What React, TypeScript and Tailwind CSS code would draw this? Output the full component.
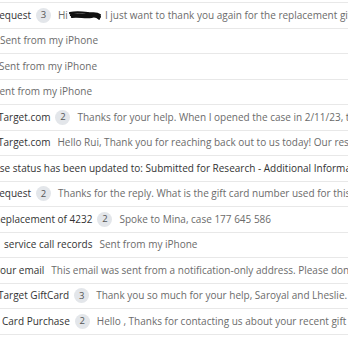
import React from "react";

type Row = {
  shift: number;
  subject?: string;
  badge?: string;
  preview?: React.ReactNode;
};

const Badge = ({ n }: { n: string }) => (
  <span className="inline-flex items-center justify-center w-[15px] h-[15px] rounded-full bg-[#e3e6ea] text-[9.5px] text-[#555] ml-[5px] mr-[7px] shrink-0">
    {n}
  </span>
);

const Scribble = () => (
  <svg width="32" height="12" viewBox="0 0 34 12" className="inline-block ml-[1px] mr-[4px] shrink-0">
    <path d="M1 4 C8 2 14 3 20 4 C25 5 29 3 33 6 M2 6 C9 5 16 7 22 6 C27 5 31 7 33 8 M3 8 C10 7 17 9 24 8 C28 7 31 9 32 10 M4 5 L30 7" stroke="#111" strokeWidth="2.2" fill="none" strokeLinecap="round" />
  </svg>
);

const rows: Row[] = [
  {
    shift: -7,
    subject: "Request",
    badge: "3",
    preview: (
      <>
        Hi<Scribble />I just want to thank you again for the replacement gift card
      </>
    ),
  },
  { shift: 0, preview: "Sent from my iPhone" },
  { shift: -1, preview: "Sent from my iPhone" },
  { shift: -6, preview: "Sent from my iPhone" },
  {
    shift: -2,
    subject: "Target.com",
    badge: "2",
    preview: "Thanks for your help. When I opened the case in 2/11/23, the",
  },
  {
    shift: -2,
    subject: "Target.com",
    preview: "Hello Rui, Thank you for reaching back out to us today! Our research",
  },
  {
    shift: -12,
    subject: "Case status has been updated to: Submitted for Research - Additional Information",
  },
  {
    shift: -7,
    subject: "Request",
    badge: "2",
    preview: "Thanks for the reply. What is the gift card number used for this purchase",
  },
  {
    shift: -6,
    subject: "Replacement of 4232",
    badge: "2",
    preview: "Spoke to Mina, case 177 645 586",
  },
  {
    shift: 4,
    subject: "service call records",
    preview: "Sent from my iPhone",
  },
  {
    shift: -5,
    subject: "your email",
    preview: "This email was sent from a notification-only address. Please don't reply",
  },
  {
    shift: -2,
    subject: "Target GiftCard",
    badge: "3",
    preview: "Thank you so much for your help, Saroyal and Lheslie. I appreciate",
  },
  {
    shift: 2,
    subject: "Card Purchase",
    badge: "2",
    preview: "Hello , Thanks for contacting us about your recent gift card",
  },
];

export default function App() {
  return (
    <div
      className="w-[348px] h-[348px] overflow-hidden bg-white pt-[2px]"
      style={{ fontFamily: '"Open Sans", "Noto Sans", sans-serif' }}
    >
      <div className="flex flex-col border-t border-[#e8e8e8]">
        {rows.map((r, i) => (
          <div
            key={i}
            className="h-[25.5px] flex items-center border-b border-[#e8e8e8] overflow-hidden whitespace-nowrap text-[10px]"
          >
            <div className="flex items-center" style={{ marginLeft: r.shift }}>
              {r.subject && (
                <span className={r.badge ? "text-[#333]" : "text-[#333] mr-[7px]"}>{r.subject}</span>
              )}
              {r.badge && <Badge n={r.badge} />}
              {r.preview && <span className="text-[#6b6b6b] flex items-center">{r.preview}</span>}
            </div>
          </div>
        ))}
      </div>
    </div>
  );
}
